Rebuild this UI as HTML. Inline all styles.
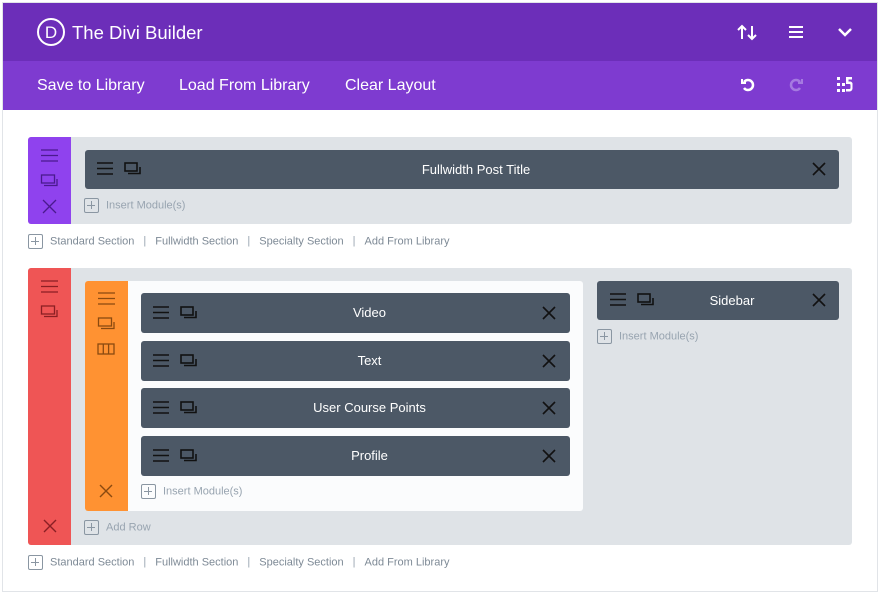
<!DOCTYPE html>
<html><head><meta charset="utf-8"><style>
*{margin:0;padding:0;box-sizing:border-box}
body{width:880px;height:583px;background:#fff;font-family:"Liberation Sans",sans-serif;position:relative;overflow:hidden}
.a{position:absolute}
.frame{left:2px;top:2px;width:876px;height:590px;border:1px solid #e1e4e8}
.hd{left:3px;top:3px;width:874px;height:58px;background:#6c2eb9;color:#fff}
.tb{left:3px;top:61px;width:874px;height:49px;background:#7e3bd0;color:#fff;font-size:16px}
.sec{background:#dfe3e7;border-radius:3px}
.mod{background:#4c5866;border-radius:3px;color:#fff;font-size:13px;text-align:center;padding-left:28px}
.ins{font-size:11px;color:#98a4b0}
.plus{display:inline-block;width:15px;height:15px;border:1.5px solid #8a96a2;border-radius:2px;position:relative;vertical-align:middle;margin-right:7px}
.plus:before{content:"";position:absolute;left:2px;top:5.5px;width:8px;height:1.5px;background:#8a96a2}
.plus:after{content:"";position:absolute;left:5.5px;top:2px;width:1.5px;height:8px;background:#8a96a2}
.links{font-size:11px;color:#7e8a96}
.links .sep{margin:0 9px;color:#98a4b0}
</style></head><body>
<div class="a frame"></div>
<div class="a hd">
  <svg class="a" style="left:33px;top:14px" width="30" height="30"><circle cx="15" cy="15" r="13" fill="none" stroke="#fff" stroke-width="2"/><text x="15" y="21" text-anchor="middle" font-size="17" fill="#fff" font-family="Liberation Sans">D</text></svg>
  <div class="a" style="left:69px;top:19px;font-size:18.5px">The Divi Builder</div>
  <svg class="a" style="left:734px;top:20px" width="22" height="18" stroke="#fff" stroke-width="2" fill="none"><path d="M5 16V3M1 7l4-4 4 4M15 3v13M11 12l4 4 4-4"/></svg>
  <svg class="a" style="left:785px;top:22px" width="16" height="14" stroke="#fff" stroke-width="2"><path d="M1 2h14M1 7h14M1 12h14"/></svg>
  <svg class="a" style="left:834px;top:23px" width="16" height="12" stroke="#fff" stroke-width="2.5" fill="none"><path d="M2 3l6 6 6-6"/></svg>
</div>
<div class="a tb">
  <div class="a" style="left:34px;top:16px">Save to Library</div>
  <div class="a" style="left:176px;top:16px">Load From Library</div>
  <div class="a" style="left:342px;top:16px">Clear Layout</div>
  <svg class="a" style="left:737px;top:16px" width="16" height="16" stroke="#fff" stroke-width="2.5" fill="none"><path d="M4 5a5 5 0 1 1 0 6"/><path d="M2 2v4h4" stroke-width="2"/></svg>
  <svg class="a" style="left:785px;top:16px" width="16" height="16" stroke="#a57ae0" stroke-width="2.5" fill="none"><path d="M12 5a5 5 0 1 0 0 6"/><path d="M14 2v4h-4" stroke-width="2"/></svg>
  <svg class="a" style="left:834px;top:15px" width="16" height="17" fill="#fff"><rect x="0" y="1" width="3" height="3"/><rect x="0" y="7" width="3" height="3"/><rect x="0" y="13" width="3" height="3"/><rect x="5" y="7" width="3" height="3"/><rect x="5" y="13" width="3" height="3"/><path d="M9 1h6v2.5h-3.5v2h2a2.5 2.5 0 0 1 2 3v4a3 3 0 0 1-3 3H9v-2.5h3.5a1 1 0 0 0 1-1V9a1 1 0 0 0-1-1H9z"/></svg>
</div>

<!-- Section 1 -->
<div class="a sec" style="left:28px;top:137px;width:824px;height:87px"></div>
<div class="a" style="left:28px;top:137px;width:43px;height:87px;background:#8f42ee;border-radius:3px 0 0 3px"></div>
<svg class="a" style="left:40px;top:148px" width="20" height="68" stroke="#4a1a8e" stroke-width="1.3" fill="none"><path d="M1 2h17M1 7.5h17M1 13h17"/><rect x="1.5" y="27" width="13" height="8"/><path d="M4 37.5h13V31"/><path d="M3 52l13 13M16 52L3 65"/></svg>
<div class="a mod" style="left:85px;top:150px;width:754px;height:39px;line-height:39px">Fullwidth Post Title</div>
<svg class="a" style="left:96px;top:161px" width="50" height="18" stroke="#111" stroke-width="1.6" fill="none"><path d="M1 2h16M1 7.5h16M1 13h16"/><rect x="29" y="2" width="12" height="8"/><path d="M32 12.5h12V6"/></svg>
<svg class="a" style="left:812px;top:162px" width="14" height="14" stroke="#111" stroke-width="1.6"><path d="M1 1l12 12M13 1L1 13"/></svg>
<div class="a ins" style="left:84px;top:198px"><span class="plus"></span>Insert Module(s)</div>
<div class="a links" style="left:28px;top:234px"><span class="plus"></span>Standard Section<span class="sep">|</span>Fullwidth Section<span class="sep">|</span>Specialty Section<span class="sep">|</span>Add From Library</div>

<!-- Section 2 -->
<div class="a sec" style="left:28px;top:268px;width:824px;height:277px"></div>
<div class="a" style="left:28px;top:268px;width:43px;height:277px;background:#ef5555;border-radius:3px 0 0 3px"></div>
<svg class="a" style="left:40px;top:279px" width="20" height="40" stroke="#8a1f24" stroke-width="1.3" fill="none"><path d="M1 2h17M1 7.5h17M1 13h17"/><rect x="1.5" y="27" width="13" height="8"/><path d="M4 37.5h13V31"/></svg>
<svg class="a" style="left:43px;top:519px" width="14" height="14" stroke="#8a1f24" stroke-width="1.4"><path d="M1 1l12 12M13 1L1 13"/></svg>
<div class="a" style="left:85px;top:281px;width:498px;height:230px;background:#fbfcfd;border-radius:3px"></div>
<div class="a" style="left:85px;top:281px;width:43px;height:230px;background:#ff9232;border-radius:3px 0 0 3px"></div>
<svg class="a" style="left:97px;top:291px" width="20" height="68" stroke="#8a4a10" stroke-width="1.3" fill="none"><path d="M1 2h17M1 7.5h17M1 13h17"/><rect x="1.5" y="27" width="13" height="8"/><path d="M4 37.5h13V31"/><rect x="1" y="53" width="16" height="10"/><path d="M6.3 53v10M11.6 53v10"/></svg>
<svg class="a" style="left:99px;top:484px" width="14" height="14" stroke="#8a4a10" stroke-width="1.4"><path d="M1 1l12 12M13 1L1 13"/></svg>

<div class="a mod" style="left:141px;top:293px;width:429px;height:40px;line-height:40px">Video</div>
<div class="a mod" style="left:141px;top:341px;width:429px;height:40px;line-height:40px">Text</div>
<div class="a mod" style="left:141px;top:388px;width:429px;height:40px;line-height:40px">User Course Points</div>
<div class="a mod" style="left:141px;top:436px;width:429px;height:40px;line-height:40px">Profile</div>
<svg class="a" style="left:152px;top:305px" width="430" height="170" stroke="#111" stroke-width="1.6" fill="none">
<g><path d="M1 2h16M1 7.5h16M1 13h16"/><rect x="29" y="2" width="12" height="8"/><path d="M32 12.5h12V6"/><path d="M391 2l12 12M403 2l-12 12"/></g>
<g transform="translate(0,48)"><path d="M1 2h16M1 7.5h16M1 13h16"/><rect x="29" y="2" width="12" height="8"/><path d="M32 12.5h12V6"/><path d="M391 2l12 12M403 2l-12 12"/></g>
<g transform="translate(0,95)"><path d="M1 2h16M1 7.5h16M1 13h16"/><rect x="29" y="2" width="12" height="8"/><path d="M32 12.5h12V6"/><path d="M391 2l12 12M403 2l-12 12"/></g>
<g transform="translate(0,143)"><path d="M1 2h16M1 7.5h16M1 13h16"/><rect x="29" y="2" width="12" height="8"/><path d="M32 12.5h12V6"/><path d="M391 2l12 12M403 2l-12 12"/></g>
</svg>
<div class="a ins" style="left:141px;top:484px"><span class="plus"></span>Insert Module(s)</div>
<div class="a ins" style="left:84px;top:520px"><span class="plus"></span>Add Row</div>

<div class="a mod" style="left:597px;top:281px;width:242px;height:39px;line-height:39px">Sidebar</div>
<svg class="a" style="left:609px;top:292px" width="220" height="18" stroke="#111" stroke-width="1.6" fill="none"><path d="M1 2h16M1 7.5h16M1 13h16"/><rect x="29" y="2" width="12" height="8"/><path d="M32 12.5h12V6"/><path d="M204 2l12 12M216 2l-12 12"/></svg>
<div class="a ins" style="left:597px;top:329px"><span class="plus"></span>Insert Module(s)</div>

<div class="a links" style="left:28px;top:555px"><span class="plus"></span>Standard Section<span class="sep">|</span>Fullwidth Section<span class="sep">|</span>Specialty Section<span class="sep">|</span>Add From Library</div>
</body></html>
